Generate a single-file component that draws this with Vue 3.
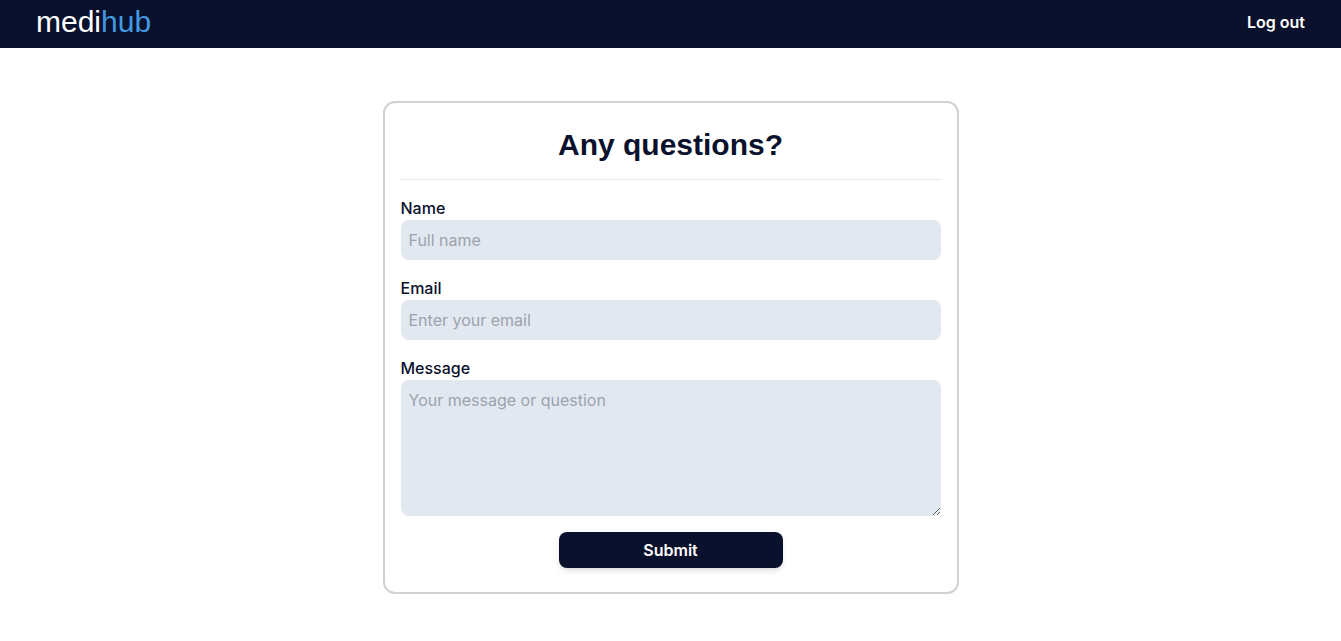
<script setup>
import { ref } from 'vue'

const name = ref('')
const email = ref('')
const message = ref('')
</script>

<template>
  <header class="bar">
    <a class="logo" href="#">medi<span class="accent">hub</span></a>
    <button class="logout" type="button">Log out</button>
  </header>
  <main class="content">
    <form class="card" @submit.prevent>
      <h1 class="title">Any questions?</h1>
      <div class="field">
        <label for="name">Name</label>
        <input id="name" v-model="name" type="text" placeholder="Full name" />
      </div>
      <div class="field">
        <label for="email">Email</label>
        <input id="email" v-model="email" type="email" placeholder="Enter your email" />
      </div>
      <div class="field">
        <label for="message">Message</label>
        <textarea id="message" v-model="message" rows="5" placeholder="Your message or question"></textarea>
      </div>
      <button class="submit" type="submit">Submit</button>
    </form>
  </main>
</template>

<style>
body {
  margin: 0;
  background: #ffffff;
  font-family: Inter, "Liberation Sans", sans-serif;
  font-size: 16px;
  line-height: 24px;
  color: #0a112d;
}
</style>

<style scoped>
* {
  box-sizing: border-box;
}

.bar {
  display: flex;
  align-items: center;
  justify-content: space-between;
  height: 48px;
  padding: 0 36px 4px;
  background: #0a112d;
}

.logo {
  font-family: "Liberation Sans", Arial, sans-serif;
  font-size: 30px;
  line-height: 36px;
  color: #ffffff;
  text-decoration: none;
}

.accent {
  color: #4299e1;
}

.logout {
  padding: 0;
  border: 0;
  background: none;
  font: inherit;
  font-weight: 600;
  color: #ffffff;
  cursor: pointer;
}

.content {
  display: flex;
  justify-content: center;
  padding: 53px 16px 32px;
}

.card {
  display: flex;
  flex-direction: column;
  gap: 16px;
  width: 100%;
  max-width: 576px;
  padding: 16px 16px 24px;
  border: 2px solid #d1d1d1;
  border-radius: 12px;
}

.title {
  margin: 0;
  padding: 8px 0 16px;
  border-bottom: 1px solid #e5e7eb;
  font-family: "Liberation Sans", Arial, sans-serif;
  font-size: 30px;
  line-height: 36px;
  font-weight: 700;
  text-align: center;
}

.field {
  display: flex;
  flex-direction: column;
}

label {
  font-weight: 500;
}

input,
textarea {
  display: block;
  width: 100%;
  margin: 0;
  padding: 8px;
  border: 0;
  border-radius: 8px;
  background: #e2e8f0;
  font: inherit;
  color: inherit;
}

textarea {
  resize: vertical;
}

input::placeholder,
textarea::placeholder {
  color: #9ca3af;
  opacity: 1;
}

.submit {
  align-self: center;
  width: 224px;
  height: 36px;
  padding: 0;
  border: 0;
  border-radius: 8px;
  background: #0a112d;
  box-shadow: 0 4px 6px -1px rgba(0, 0, 0, 0.1), 0 2px 4px -2px rgba(0, 0, 0, 0.1);
  font: inherit;
  font-weight: 600;
  color: #ffffff;
  cursor: pointer;
}
</style>
